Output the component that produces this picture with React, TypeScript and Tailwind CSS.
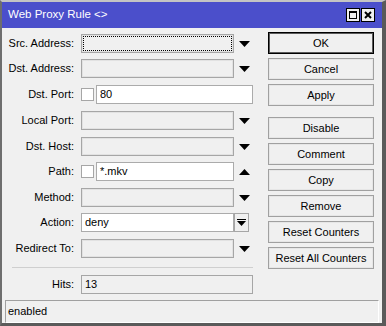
const Down = () => (
  <svg width="11" height="6" viewBox="0 0 11 6">
    <path d="M0 0h11L5.5 6z" fill="#000" />
  </svg>
);

const Up = () => (
  <svg width="11" height="6" viewBox="0 0 11 6">
    <path d="M0 6h11L5.5 0z" fill="#000" />
  </svg>
);

type Row = {
  label: string;
  mt: string;
  kind: "combo" | "text" | "check" | "action";
  value?: string;
  focus?: boolean;
  arrow?: "down" | "up";
};

const rows: Row[] = [
  { label: "Src. Address:", mt: "mt-0", kind: "combo", focus: true, arrow: "down" },
  { label: "Dst. Address:", mt: "mt-[6px]", kind: "combo", arrow: "down" },
  { label: "Dst. Port:", mt: "mt-[7px]", kind: "check", value: "80" },
  { label: "Local Port:", mt: "mt-[7px]", kind: "combo", arrow: "down" },
  { label: "Dst. Host:", mt: "mt-[7px]", kind: "combo", arrow: "down" },
  { label: "Path:", mt: "mt-[6px]", kind: "check", value: "*.mkv", arrow: "up" },
  { label: "Method:", mt: "mt-[7px]", kind: "combo", arrow: "down" },
  { label: "Action:", mt: "mt-[6px]", kind: "action", value: "deny" },
  { label: "Redirect To:", mt: "mt-[7px]", kind: "combo", arrow: "down" },
];

const buttons = [
  { name: "OK", mt: "mt-0", def: true },
  { name: "Cancel", mt: "mt-[4px]" },
  { name: "Apply", mt: "mt-[4px]" },
  { name: "Disable", mt: "mt-[11px]" },
  { name: "Comment", mt: "mt-[4px]" },
  { name: "Copy", mt: "mt-[4px]" },
  { name: "Remove", mt: "mt-[4px]" },
  { name: "Reset Counters", mt: "mt-[4px]" },
  { name: "Reset All Counters", mt: "mt-[4px]" },
];

export default function App() {
  return (
    <div className="w-[386px] h-[326px] flex flex-col bg-[#f0f0f0] border-t-2 border-l-2 border-r-[4px] border-b-[3px] border-t-[#c4c4c4] border-l-[#6e6e6e] border-r-[#5a5a5a] border-b-[#5a5a5a] font-['Liberation_Sans',Arial,sans-serif] text-[11px] text-black">
      {/* title bar */}
      <div className="h-[26px] shrink-0 bg-[#4b4fcb] flex items-center pl-[6px] pr-[4px]">
        <span className="text-white text-[11.5px] flex-1">Web Proxy Rule &lt;&gt;</span>
        <div className="flex gap-[1px] mr-[3px]">
          <div className="w-[14px] h-[14px] border border-black bg-[#f0f0f0] flex items-center justify-center">
            <div className="w-[8px] h-[8px] border border-black border-t-2" />
          </div>
          <div className="w-[14px] h-[14px] border border-black bg-[#f0f0f0] flex items-center justify-center">
            <svg width="8" height="8" viewBox="0 0 8 8">
              <path d="M1 1L7 7M7 1L1 7" stroke="#000" strokeWidth="2" />
            </svg>
          </div>
        </div>
      </div>

      <div className="flex flex-1">
        {/* form */}
        <div className="w-[264px] pt-[6px] flex flex-col">
          {rows.map((r) => (
            <div key={r.label} className={`flex items-center h-[19px] ${r.mt}`}>
              <div className="w-[73px] text-right pr-[1px]">{r.label}</div>
              <div className="ml-[6px] flex items-center h-full">
                {r.kind === "combo" && (
                  <div className="w-[153px] h-full border border-[#a6a6a6] shadow-[inset_0_0_0_1px_#e2e2e2] p-[1px]">
                    {r.focus && <div className="w-full h-full border border-dotted border-black" />}
                  </div>
                )}
                {r.kind === "check" && (
                  <>
                    <div className="w-[13px] h-[13px] border border-[#a6a6a6] bg-white" />
                    <div
                      className={`ml-[2px] h-full border border-[#ababab] bg-white pl-[3px] flex items-center ${
                        r.arrow ? "w-[138px]" : "w-[157px]"
                      }`}
                    >
                      {r.value}
                    </div>
                  </>
                )}
                {r.kind === "action" && (
                  <>
                    <div className="w-[153px] h-full border border-[#ababab] bg-white pl-[3px] flex items-center">
                      {r.value}
                    </div>
                    <div className="w-[15px] h-full border border-[#a6a6a6] bg-[#f0f0f0] flex flex-col items-center justify-center">
                      <div className="w-[9px] h-[1px] bg-black mb-[1px]" />
                      <svg width="9" height="5" viewBox="0 0 9 5">
                        <path d="M0 0h9L4.5 5z" fill="#000" />
                      </svg>
                    </div>
                  </>
                )}
                {r.arrow && (
                  <div className="ml-[5px] flex items-center">
                    {r.arrow === "down" ? <Down /> : <Up />}
                  </div>
                )}
              </div>
            </div>
          ))}
          <div className="mt-[9px] ml-[10px] w-[241px] h-[1px] bg-[#cfcfcf]" />
          <div className="flex items-center h-[19px] mt-[7px]">
            <div className="w-[73px] text-right pr-[1px]">Hits:</div>
            <div className="ml-[6px] w-[172px] h-full border border-[#a6a6a6] pl-[3px] flex items-center">13</div>
          </div>
        </div>

        {/* buttons */}
        <div className="pt-[4px] ml-[2px] flex flex-col">
          {buttons.map((b) => (
            <div
              key={b.name}
              className={`w-[106px] h-[22px] flex items-center justify-center bg-[#f0f0f0] ${b.mt} ${
                b.def
                  ? "border border-black shadow-[inset_0_0_0_1px_#5a5a5a]"
                  : "border border-[#a0a0a0] shadow-[inset_0_0_0_1px_#e6e6e6]"
              }`}
            >
              {b.name}
            </div>
          ))}
        </div>
      </div>

      {/* status bar */}
      <div className="h-[23px] shrink-0 mx-[3px] mb-[0px] border-t border-l border-[#a0a0a0] border-r border-r-white border-b border-b-white flex items-center pl-[2px]">
        enabled
      </div>
    </div>
  );
}
